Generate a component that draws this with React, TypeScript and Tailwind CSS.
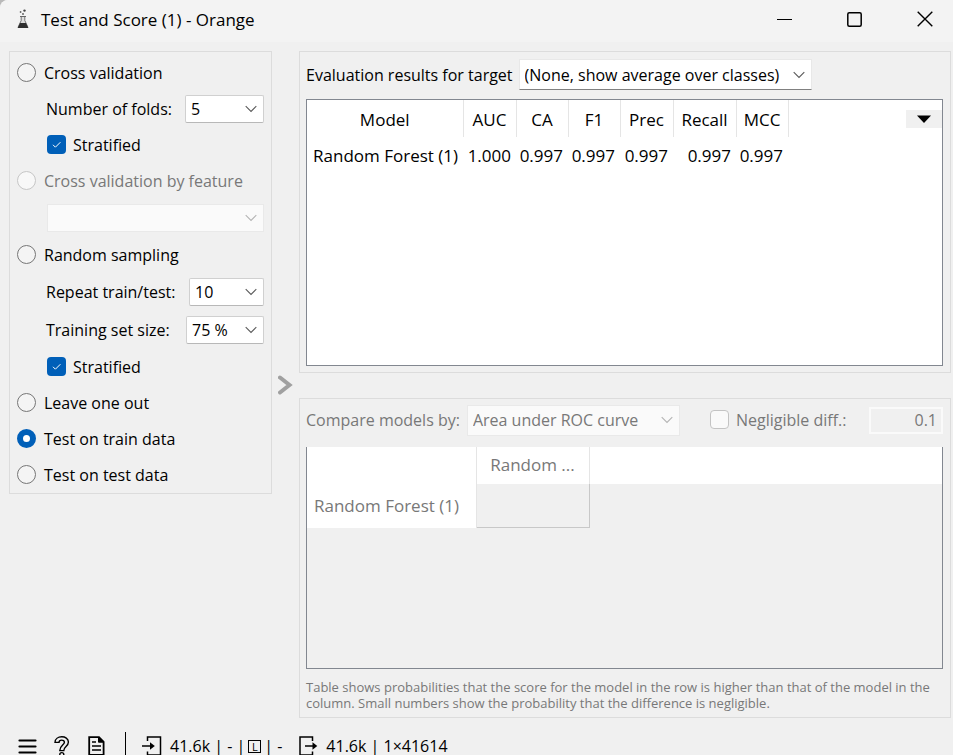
import type { ReactNode } from "react";

const UI = "font-['Open_Sans','Noto_Sans',sans-serif]";

function Chevron({ className }: { className: string }) {
  return (
    <svg
      className={`pointer-events-none absolute top-1/2 -translate-y-1/2 ${className}`}
      width="12"
      height="8"
      viewBox="0 0 12 8"
      fill="none"
      stroke="currentColor"
      strokeWidth="1.1"
      aria-hidden="true"
    >
      <path d="M0.7 1.2 L6 6.4 L11.3 1.2" />
    </svg>
  );
}

type ComboProps = {
  id: string;
  label?: string;
  value: string;
  disabled?: boolean;
  box: string;
  border?: string;
};

function Combo({ id, label, value, disabled, box, border }: ComboProps) {
  const look = disabled
    ? "border-[#e9e9e9] bg-[#fafafa] text-[#787878]"
    : (border ?? "rounded-xs border-[#d0d0d0] border-b-[#b8b8b8]") + " bg-white text-black";
  return (
    <div className={`relative shrink-0 ${box}`}>
      <select
        id={id}
        aria-label={label}
        disabled={disabled}
        defaultValue={value}
        className={`h-full w-full appearance-none border pr-5 pl-[5px] opacity-100 ${look}`}
      >
        <option>{value}</option>
      </select>
      <Chevron className={`right-[7px] ${disabled ? "text-[#b4b4b4]" : "text-[#5a5a5a]"}`} />
    </div>
  );
}

function Radio({ label, checked, disabled }: { label: string; checked?: boolean; disabled?: boolean }) {
  const look = disabled
    ? "border border-[#c6c6c6] bg-[#f8f8f8]"
    : checked
      ? "border-[6px] border-[#005fb8] bg-white"
      : "border border-[#767676] bg-[#f4f4f4]";
  return (
    <label className={`flex h-7 items-center gap-2 pl-[7px] ${disabled ? "text-[#787878]" : ""}`}>
      <input
        type="radio"
        name="sampling"
        defaultChecked={checked}
        disabled={disabled}
        className={`mb-0.5 size-[19px] shrink-0 appearance-none rounded-full ${look}`}
      />
      {label}
    </label>
  );
}

function Stratified() {
  return (
    <label className="flex h-7 items-center gap-[7px] pl-[37px]">
      <span className="relative mb-0.5 size-[19px]">
        <input type="checkbox" defaultChecked className="block size-[19px] appearance-none rounded-[4px] bg-[#005fb8]" />
        <svg className="pointer-events-none absolute inset-0" width="19" height="19" viewBox="0 0 19 19" fill="none" stroke="#fff" strokeWidth="1">
          <path d="M6 9.8 L8.4 12.2 L13.4 7.2" />
        </svg>
      </span>
      Stratified
    </label>
  );
}

function Field({ id, label, className, children }: { id: string; label: string; className: string; children: ReactNode }) {
  return (
    <div className={`flex items-center justify-between pr-[7px] pl-9 ${className}`}>
      <label htmlFor={id}>{label}</label>
      {children}
    </div>
  );
}

const columns = [
  { name: "Model", width: "w-[156px]", value: "Random Forest (1)" },
  { name: "AUC", width: "w-[53px]", value: "1.000" },
  { name: "CA", width: "w-[52px]", value: "0.997" },
  { name: "F1", width: "w-[52px]", value: "0.997" },
  { name: "Prec", width: "w-[53px]", value: "0.997" },
  { name: "Recall", width: "w-[63px]", value: "0.997" },
  { name: "MCC", width: "w-[52px]", value: "0.997" },
];

export default function App() {
  return (
    <div className="h-screen bg-[#b9b9b9]">
      <div className={`flex h-full flex-col overflow-hidden rounded-tl-lg bg-[#f0f0f0] text-[16px] leading-5 text-black ${UI}`}>
        <header className="flex h-[42px] shrink-0 items-center bg-[#f3f3f3] pl-[17px]">
          <svg className="mb-1" width="12" height="20" viewBox="0 0 12 20" aria-hidden="true">
            <circle cx="7.5" cy="1.6" r="1.2" fill="#444" />
            <circle cx="3.6" cy="3" r="0.9" fill="#666" />
            <circle cx="6" cy="5" r="0.9" fill="#555" />
            <path d="M4.2 7.5 V11.5 L1 18.4 H11 L7.8 11.5 V7.5" fill="#ddd" stroke="#666" strokeWidth="0.9" />
            <path d="M3 7.5 H9" stroke="#666" strokeWidth="1" />
            <path d="M3 14 H9 L11.3 19 H0.7 Z" fill="#2e2e2e" />
          </svg>
          <h1 className="flex-1 pb-0.5 pl-3 text-[17px] leading-6">Test and Score (1) - Orange</h1>
          <button aria-label="Minimize" className="flex h-full w-[70px] items-center justify-center">
            <svg className="mb-1" width="15" height="15" viewBox="0 0 15 15"><path d="M0 7.5 H15" stroke="#000" /></svg>
          </button>
          <button aria-label="Maximize" className="flex h-full w-[70px] items-center justify-center">
            <svg className="mb-1" width="15" height="15" viewBox="0 0 15 15"><rect x="0.8" y="0.8" width="13.4" height="13.4" rx="1.5" fill="none" stroke="#000" strokeWidth="1.5" /></svg>
          </button>
          <button aria-label="Close" className="flex h-full w-16 items-center justify-center pl-2">
            <svg className="mb-1" width="16" height="16" viewBox="0 0 16 16"><path d="M0.7 0.7 L15.3 15.3 M15.3 0.7 L0.7 15.3" stroke="#000" strokeWidth="1.4" /></svg>
          </button>
        </header>

        <main className="flex min-h-0 flex-1 pt-[9px] pr-0.5 pl-[9px]">
          <section className="flex w-[263px] shrink-0 flex-col gap-2 self-start border border-[#dcdcdc] pt-[7px] pb-1">
            <Radio label="Cross validation" />
            <Field id="folds" label="Number of folds:" className="h-7">
              <Combo id="folds" value="5" box="h-7 w-[79px]" />
            </Field>
            <Stratified />
            <Radio label="Cross validation by feature" disabled />
            <div className="flex h-[30px] items-center pr-[7px] pl-[37px]">
              <Combo id="feature" label="Feature" value="" disabled box="h-7 w-full" />
            </div>
            <Radio label="Random sampling" />
            <Field id="repeat" label="Repeat train/test:" className="h-[30px]">
              <Combo id="repeat" value="10" box="h-7 w-[75px]" />
            </Field>
            <Field id="size" label="Training set size:" className="h-[30px]">
              <Combo id="size" value="75 %" box="h-7 w-[78px]" />
            </Field>
            <Stratified />
            <Radio label="Leave one out" />
            <Radio label="Test on train data" checked />
            <Radio label="Test on test data" />
          </section>

          <div className="flex w-[27px] shrink-0 items-center justify-center">
            <button aria-label="Toggle the sampling panel">
              <svg width="15" height="20" viewBox="0 0 15 20" fill="none" stroke="#a0a0a0" strokeWidth="4" strokeLinecap="round">
                <path d="M2 2.5 L11.5 10 L2 17.5" />
              </svg>
            </button>
          </div>

          <div className="flex min-w-0 flex-1 flex-col gap-[25px]">
            <section className="flex min-h-0 flex-[1_1_2px] flex-col gap-[9px] border border-[#dcdcdc] p-1.5 pt-[7px] pr-[7px]">
              <div className="flex items-center gap-1.5">
                <label htmlFor="target">Evaluation results for target</label>
                <Combo id="target" value="(None, show average over classes)" box="h-[31px] w-[293px]" border="border-[#e8e8e8] border-b-[#808080]" />
              </div>
              <div className="relative min-h-0 flex-1 border border-[#828790] bg-white">
                <table className="table-fixed border-collapse text-[17px]">
                  <thead>
                    <tr className="h-[37px]">
                      {columns.map((c) => (
                        <th key={c.name} className={`border-r border-[#e5e5e5] p-0 pt-0.5 text-center font-normal ${c.width}`}>{c.name}</th>
                      ))}
                    </tr>
                  </thead>
                  <tbody>
                    <tr className="h-[37px]">
                      {columns.map((c) => (
                        <td key={c.name} className="p-0 pr-[5px] text-right whitespace-nowrap">{c.value}</td>
                      ))}
                    </tr>
                  </tbody>
                </table>
                <button aria-label="Choose columns" className="absolute top-2.5 right-0 flex h-[18px] w-9 items-center justify-center bg-[#f0f0f0]">
                  <svg width="14" height="8" viewBox="0 0 14 8"><path d="M0 0.5 H14 L7 8 Z" fill="#000" /></svg>
                </button>
              </div>
            </section>

            <section className="flex min-h-0 flex-[1_1_0px] flex-col border border-[#dcdcdc] p-1.5 pr-[7px] text-[#787878]">
              <div className="flex items-center">
                <label htmlFor="compare">Compare models by:</label>
                <Combo id="compare" value="Area under ROC curve" disabled box="ml-[7px] h-[31px] w-[213px]" />
                <label className="ml-[30px] flex items-center gap-[7px]">
                  <input type="checkbox" disabled className="mb-0.5 size-[19px] appearance-none rounded-[4px] border border-[#c3c3c3] bg-[#f9f9f9]" />
                  Negligible diff.:
                </label>
                <input
                  aria-label="Negligible difference"
                  disabled
                  defaultValue="0.1"
                  className="ml-auto h-[27px] w-[74px] border-2 border-[#fafafa] bg-[#f0f0f0] pr-1 text-right"
                />
              </div>
              <div className="mt-[11px] min-h-0 flex-1 border border-t-0 border-[#828790]">
                <table className="w-full table-fixed border-collapse text-[17px]">
                  <thead>
                    <tr className="h-[37px] bg-white">
                      <td className="w-[169px] border-r border-[#e5e5e5] p-0" />
                      <th className="w-[113px] border-r border-[#e5e5e5] p-0 text-center font-normal">Random ...</th>
                      <td className="p-0" />
                    </tr>
                  </thead>
                  <tbody>
                    <tr className="h-[44px]">
                      <th className="border-r border-[#e5e5e5] bg-white p-0 pl-[7px] text-left font-normal whitespace-nowrap">Random Forest (1)</th>
                      <td className="border-r border-b border-[#c8c8c8] p-0" />
                      <td className="p-0" />
                    </tr>
                  </tbody>
                </table>
              </div>
              <p className="mt-2.5 text-[13px] leading-4">
                Table shows probabilities that the score for the model in the row is higher than that of the model in the
                column. Small numbers show the probability that the difference is negligible.
              </p>
            </section>
          </div>
        </main>

        <footer className="flex h-[37px] shrink-0 items-start overflow-hidden pt-3.5 pl-[18px]">
          <button aria-label="Menu" className="mt-[7px]">
            <svg width="19" height="15" viewBox="0 0 19 15" stroke="#000" strokeWidth="2.2" strokeLinecap="round"><path d="M1.5 1.5 H17.5 M1.5 7.5 H17.5 M1.5 13.5 H17.5" /></svg>
          </button>
          <button aria-label="Help" className="mt-1 ml-[17px]">
            <svg width="16" height="22" viewBox="0 0 16 22" fill="none">
              <path d="M1 6.4 C1 -1 14.4 -1 14.4 6 C14.4 10.4 9.8 10.6 9.8 14.6 H5.8 C5.8 9.4 10.4 9 10.4 6.2 C10.4 3.4 5 3.4 5 6.4 Z" stroke="#000" strokeWidth="1.4" />
              <circle cx="7.8" cy="18.6" r="2" stroke="#000" strokeWidth="1.4" />
            </svg>
          </button>
          <button aria-label="Report" className="mt-1 ml-[18px]">
            <svg width="17" height="20" viewBox="0 0 17 20" fill="none" stroke="#000" strokeWidth="1.8">
              <path d="M1.2 1.2 H11 L15.6 5.8 V18.8 H1.2 Z" />
              <path d="M10.5 1.5 V6.2 H15.5 Z" fill="#000" strokeWidth="1" />
              <path d="M4 6 H8 M4 10 H13 M4 14 H13" strokeWidth="1.4" />
            </svg>
          </button>
          <span className="ml-5 h-6 w-px bg-black" />
          <div className="ml-4 flex items-start gap-2">
            <svg className="mt-1" width="20" height="20" viewBox="0 0 20 20" fill="none" stroke="#000" strokeWidth="1.5">
              <path d="M5.5 5 V1 H18.5 V19 H5.5 V15.5" />
              <path d="M0 10 H9" />
              <path d="M8 6.2 L12.8 10 L8 13.8 Z" fill="#000" stroke="none" />
            </svg>
            <span className="flex items-center gap-[3px] pt-1.5 leading-4">
              41.6k | - |
              <span className="flex h-[13px] w-[13px] items-center justify-center border border-black text-[11px] leading-none">L</span>
              | -
            </span>
          </div>
          <div className="ml-[17px] flex items-start gap-2">
            <svg className="mt-1" width="19" height="20" viewBox="0 0 19 20" fill="none" stroke="#000" strokeWidth="1.5">
              <path d="M13.5 5 V1 H1 V19 H13.5 V15.5" />
              <path d="M6 10 H14" />
              <path d="M13.5 6.2 L18.3 10 L13.5 13.8 Z" fill="#000" stroke="none" />
            </svg>
            <span className="pt-1.5 leading-4">41.6k | 1×41614</span>
          </div>
        </footer>
      </div>
    </div>
  );
}
